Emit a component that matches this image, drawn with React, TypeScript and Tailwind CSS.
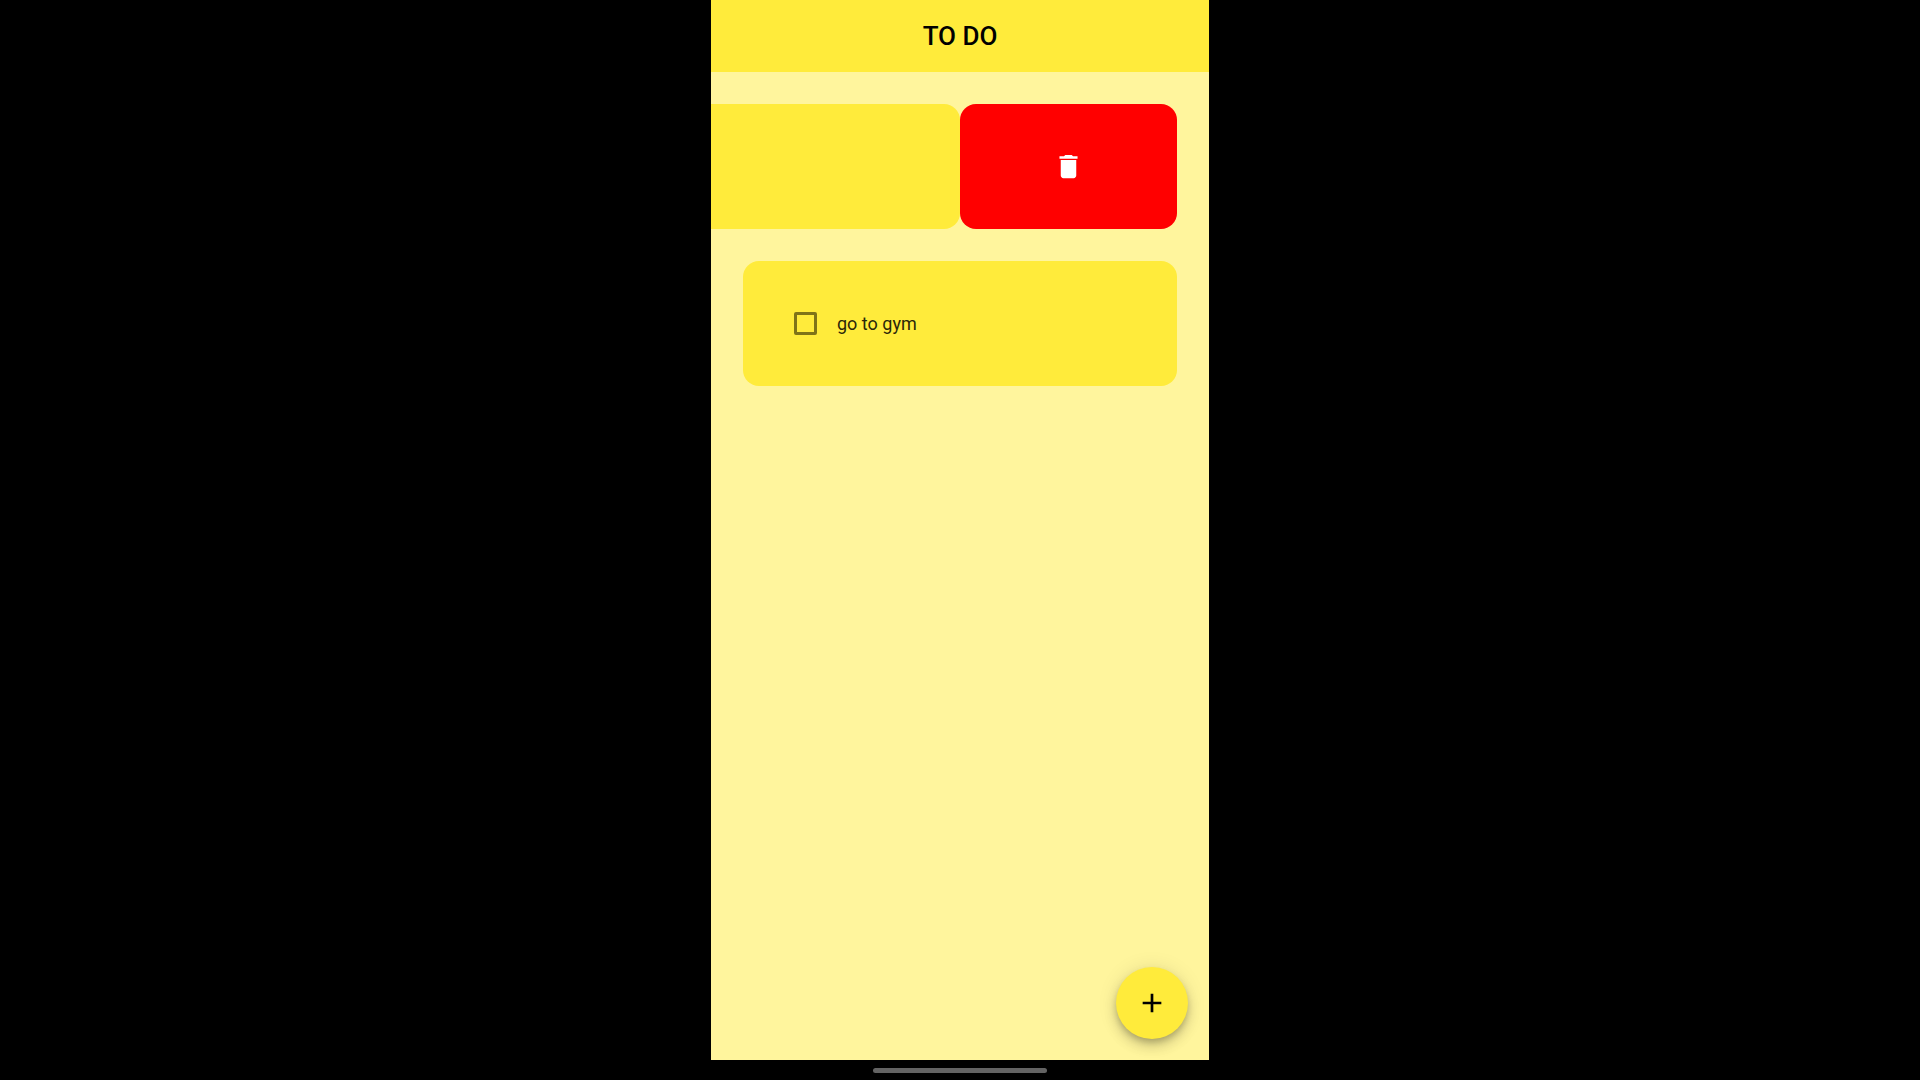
import { MdAdd, MdDelete } from "react-icons/md";

function SwipedTask() {
  return (
    <li className="flex justify-end">
      <div className="h-[125px] w-full shrink-0 rounded-2xl bg-[#ffeb3b]" />
      <button
        type="button"
        aria-label="Delete task"
        className="flex h-[125px] w-1/2 shrink-0 items-center justify-center rounded-2xl bg-[#ff0000] text-white"
      >
        <MdDelete className="size-[31px]" />
      </button>
    </li>
  );
}

function Task({ id, label }: { id: string; label: string }) {
  return (
    <li className="flex h-[125px] items-center gap-5 rounded-2xl bg-[#ffeb3b] pl-[51px]">
      <input
        id={id}
        type="checkbox"
        className="size-[23px] appearance-none rounded-xs border-[3px] border-[#7f7318] checked:bg-[#7f7318]"
      />
      <label htmlFor={id} className="text-lg text-[#2b2709]">
        {label}
      </label>
    </li>
  );
}

export default function App() {
  return (
    <div className="flex min-h-screen flex-col bg-black font-['Roboto',sans-serif]">
      <div className="mx-auto flex w-full max-w-[498px] grow flex-col overflow-hidden bg-[#fff59d]">
        <header className="flex h-[72px] items-center justify-center bg-[#ffeb3b]">
          <h1 className="text-[26px] font-medium text-black">TO DO</h1>
        </header>
        <main className="flex grow flex-col justify-between">
          <ul className="flex flex-col gap-8 p-8">
            <SwipedTask />
            <Task id="task-gym" label="go to gym" />
          </ul>
          <button
            type="button"
            aria-label="Add task"
            className="mr-[21px] mb-[21px] flex size-[72px] items-center justify-center self-end rounded-full bg-[#ffeb3b] text-black shadow-[0_4px_6px_-1px_rgba(0,0,0,0.2),0_8px_13px_rgba(0,0,0,0.14),0_1px_20px_rgba(0,0,0,0.1)]"
          >
            <MdAdd className="size-8" />
          </button>
        </main>
      </div>
      <footer className="flex h-5 items-center justify-center">
        <div className="h-[5px] w-[174px] rounded-full bg-[#636363]" />
      </footer>
    </div>
  );
}
